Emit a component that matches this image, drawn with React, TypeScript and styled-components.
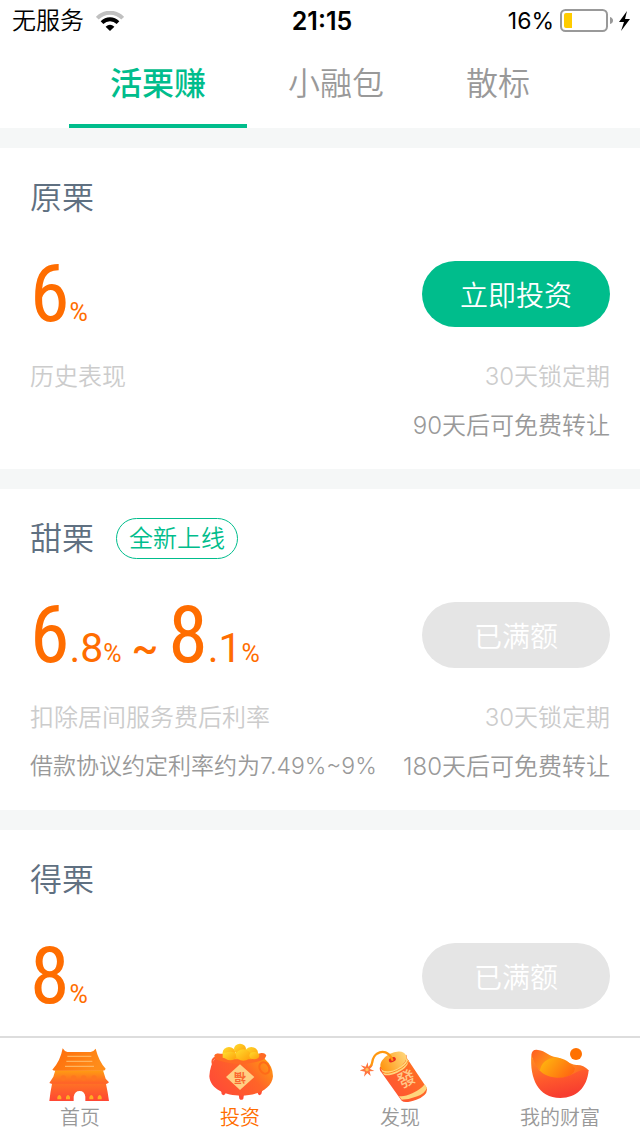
import React from "react";
import styled, { createGlobalStyle } from "styled-components";

const GREEN = "#00bd8c";
const ORANGE = "#ff6d00";

const GlobalStyle = createGlobalStyle`
  * { box-sizing: border-box; }
  body {
    margin: 0;
    background: #f5f7f7;
    font-family: Inter, "Noto Sans CJK SC", sans-serif;
    font-weight: 350;
  }
  button { font: inherit; border: 0; padding: 0; background: none; cursor: pointer; }
`;

const Screen = styled.div`
  display: flex;
  flex-direction: column;
  height: 100vh;
`;

const StatusBar = styled.header`
  display: grid;
  grid-template-columns: 1fr auto 1fr;
  align-items: center;
  height: 40px;
  padding: 0 8px 0 12px;
  background: #fff;
  color: #000;
  font-size: 24px;
  line-height: 42px;
  flex: none;
`;

const StatusGroup = styled.div<{ $end?: boolean }>`
  display: flex;
  align-items: center;
  justify-content: ${(p) => (p.$end ? "flex-end" : "flex-start")};
  gap: ${(p) => (p.$end ? 6 : 12)}px;
  font-weight: ${(p) => (p.$end ? 400 : 350)};
  font-size: ${(p) => (p.$end ? 23 : 24)}px;
`;

const Clock = styled.time`
  font-weight: 600;
  font-size: 25px;
`;

const Tabs = styled.nav`
  display: flex;
  justify-content: center;
  height: 88px;
  background: #fff;
  flex: none;
`;

const Tab = styled.button<{ $active?: boolean }>`
  && {
    padding: 0 41px;
    border-top: 4px solid transparent;
    border-bottom: 4px solid ${(p) => (p.$active ? GREEN : "transparent")};
    color: ${(p) => (p.$active ? GREEN : "#999")};
    font-size: 32px;
    font-weight: ${(p) => (p.$active ? 500 : 350)};
    line-height: 76px;
  }
`;

const List = styled.main`
  display: flex;
  flex-direction: column;
  flex: 1;
  gap: 20px;
  padding-top: 20px;
  min-height: 0;
  overflow: hidden;
`;

const Card = styled.section`
  padding: 0 30px 19px;
  background: #fff;
  flex: none;
`;

const CardHead = styled.div`
  display: flex;
  align-items: center;
  gap: 22px;
  height: 98px;
`;

const Title = styled.h2`
  margin: 0;
  padding-bottom: 4px;
  color: #5f7081;
  font-size: 32px;
  font-weight: 350;
`;

const Badge = styled.span`
  padding: 0 12px;
  border: 1px solid ${GREEN};
  border-radius: 21px;
  color: ${GREEN};
  font-size: 24px;
  line-height: 39px;
`;

const Offer = styled.div`
  display: flex;
  align-items: flex-start;
  justify-content: space-between;
  height: 66px;
  margin: 15px 0 25px;
`;

const Rate = styled.div`
  display: flex;
  align-items: baseline;
  color: ${ORANGE};
  font-family: Roboto, sans-serif;
  font-weight: 400;
  line-height: 66px;
`;

const Whole = styled.span`
  font-family: "Roboto Condensed", "Liberation Sans Narrow", Roboto, sans-serif;
  font-size: 80px;
  font-weight: 400;
`;

const Decimal = styled.span`
  font-size: 41px;
`;

const Percent = styled.span`
  font-size: 25px;
`;

const Tilde = styled.span`
  margin: 0 10px;
  font-size: 40px;
  font-weight: 500;
`;

const Invest = styled.button`
  && {
    width: 188px;
    height: 66px;
    border-radius: 33px;
    background: ${GREEN};
    color: #fff;
    font-size: 28px;
  }
  &&:disabled { background: #e5e5e5; }
`;

const Line = styled.div<{ $dark?: boolean }>`
  display: flex;
  justify-content: space-between;
  height: 49px;
  color: ${(p) => (p.$dark ? "#999" : "#ccc")};
  font-size: 24px;
  line-height: 49px;
  white-space: nowrap;
`;

const Note = styled.span`
  font-size: 23px;
`;

const BottomBar = styled.nav`
  display: grid;
  grid-template-columns: repeat(4, 1fr);
  height: 100px;
  border-top: 2px solid #ddd;
  background: #fff;
  flex: none;
`;

const NavItem = styled.a<{ $active?: boolean }>`
  display: flex;
  flex-direction: column;
  align-items: center;
  padding-top: 4px;
  color: ${(p) => (p.$active ? ORANGE : "#999")};
  font-size: 20px;
  line-height: 32px;
  text-decoration: none;
`;

const Icon = styled.svg`
  display: block;
  width: 80px;
  height: 60px;
`;

function Wifi() {
  return (
    <svg width="28" height="20" viewBox="0 0 28 20" fill="none" aria-hidden="true">
      <path d="M1.3 7.2C8.5-.1 19.5-.1 26.7 7.2" stroke="#c0c0c0" strokeWidth="4" />
      <path d="M6 11.6C10.6 7.1 17.4 7.1 22 11.6" stroke="#000" strokeWidth="3.8" />
      <path d="M9.6 15.7Q14 11.7 18.4 15.7L14 20Z" fill="#000" />
    </svg>
  );
}

function Battery() {
  return (
    <svg width="72" height="24" viewBox="0 0 72 24" aria-hidden="true">
      <rect x="1" y="1" width="46" height="21" rx="4.5" fill="#fff" stroke="#999" strokeWidth="2" />
      <path d="M4 6a2 2 0 0 1 2-2h6v15H6a2 2 0 0 1-2-2Z" fill="#fc0" />
      <path d="M50 8q3 1 3 3.500t-3 3.500Z" fill="#999" />
      <path d="M67 2 59 13h5l-3 9 9-12h-5Z" fill="#000" />
    </svg>
  );
}

function TempleIcon() {
  return (
    <Icon viewBox="30 36 240 180" aria-hidden="true">
      <defs>
        <linearGradient id="roof" x1="0" y1="0" x2="1" y2="0.3">
          <stop offset="0" stopColor="#ff6a0a" /><stop offset="1" stopColor="#ff8d1a" />
        </linearGradient>
        <linearGradient id="wall" x1="0" y1="0" x2="0" y2="1">
          <stop offset="0" stopColor="#ff9c12" /><stop offset="1" stopColor="#ff6029" />
        </linearGradient>
        <linearGradient id="base" x1="0" y1="0" x2="0" y2="1">
          <stop offset="0" stopColor="#ff7a22" /><stop offset="1" stopColor="#ff4634" />
        </linearGradient>
      </defs>
      <path d="M63 158 66 162Q61 185 58 213H131V200Q134 183 149 183T166 200V213H237Q233 184 228 162L235 158 225 150H72Z" fill="url(#base)" />
      <path d="M76 121 70 140 58 159Q64 162 69 161H227Q234 161 237 157L227 146 219 121Z" fill="url(#wall)" />
      <path d="M98 55Q104 65 112 66H182Q191 64 197 56Q207 95 227 116Q226 122 218 122H76Q70 122 67 119Q91 94 98 55Z" fill="url(#roof)" />
      <path d="M112 79H184M109 94H187M105 109H192" stroke="#ffb45e" strokeWidth="4" />
      <g fill="#ff7620"><circle cx="100" cy="144" r="8" /><circle cx="131" cy="144" r="8" /><circle cx="161" cy="144" r="8" /><circle cx="192" cy="144" r="8" /></g>
      <g fill="#ffac23">
        <path d="M82 208V201q6-12 12 0v7ZM108 208v-7q6-12 12 0v7ZM178 208v-7q6-12 12 0v7ZM203 208v-7q6-12 12 0v7Z" />
      </g>
    </Icon>
  );
}

function PotIcon() {
  return (
    <Icon viewBox="30 36 240 180" aria-hidden="true">
      <defs>
        <linearGradient id="pot" x1="0" y1="0.8" x2="1" y2="0.2">
          <stop offset="0" stopColor="#ff4938" /><stop offset="0.6" stopColor="#ff6428" /><stop offset="1" stopColor="#ff9d12" />
        </linearGradient>
        <linearGradient id="coin" x1="0" y1="0" x2="1" y2="1">
          <stop offset="0" stopColor="#ffdc2e" /><stop offset="1" stopColor="#ff9d0a" />
        </linearGradient>
      </defs>
      <path d="M93 180h14l-1 12q-6 7-11 0ZM146 193h16l-2 13q-6 7-12 0ZM202 180h15l-3 12q-6 7-10 0Z" fill="#ff4c35" />
      <path d="M77 82Q63 87 69 105" fill="none" stroke="#ff5c2d" strokeWidth="6" />
      <path d="M76 84Q72 73 84 71H221Q230 74 224 86Q249 108 249 139C246 177 201 197 154 197S60 178 58 139Q60 105 76 84Z" fill="url(#pot)" />
      <path d="M73 76Q77 68 87 71Q150 91 214 69Q224 68 229 76Q225 88 216 91Q150 113 82 90Q74 87 73 76Z" fill="#ff6a25" />
      <g fill="url(#coin)">
        <ellipse cx="117" cy="68" rx="19" ry="17" /><ellipse cx="150" cy="57" rx="18" ry="16" /><ellipse cx="184" cy="68" rx="20" ry="17" />
        <path d="M98 68h105v14l-18 6h-70l-17-5Z" />
        <ellipse cx="121" cy="78" rx="18" ry="13" /><ellipse cx="160" cy="75" rx="22" ry="17" /><ellipse cx="193" cy="77" rx="15" ry="11" />
      </g>
      <ellipse cx="223" cy="114" rx="14" ry="18" fill="none" stroke="#ff6b19" strokeWidth="6" transform="rotate(-30 223 114)" />
      <path d="M150 103 193 141 150 180 108 141Z" fill="#ffcf83" />
      <text x="150" y="154" textAnchor="middle" fontSize="36" fontWeight="700" fill="#fa6830" transform="rotate(180 150 142)">福</text>
    </Icon>
  );
}

function CrackerIcon() {
  return (
    <Icon viewBox="30 36 240 180" aria-hidden="true">
      <defs>
        <linearGradient id="tube" x1="0" y1="1" x2="1" y2="0">
          <stop offset="0" stopColor="#ff4b38" /><stop offset="1" stopColor="#ff7b1c" />
        </linearGradient>
        <linearGradient id="top" x1="0" y1="0" x2="1" y2="0">
          <stop offset="0" stopColor="#ff9510" /><stop offset="1" stopColor="#ffd579" />
        </linearGradient>
      </defs>
      <path d="M90 111 166 76Q171 71 170 83L230 173Q236 195 199 209Q165 221 155 212L94 127Q87 120 90 111Z" fill="url(#tube)" />
      <path d="M91 113Q99 130 135 116T169 83L176 94Q171 116 142 128T102 134ZM147 198Q161 202 187 190T224 163L231 173Q226 189 202 199T155 209Z" fill="#ffd57d" />
      <path d="M99 127Q111 135 140 122T175 91" fill="none" stroke="#ff8c24" strokeWidth="3" />
      <ellipse cx="130" cy="94" rx="42" ry="25" fill="url(#top)" transform="rotate(-28 130 94)" />
      <ellipse cx="127" cy="89" rx="11" ry="7" fill="#e92c1e" transform="rotate(-24 127 89)" />
      <path d="M127 89C117 66 98 60 81 71C58 87 76 105 53 116" fill="none" stroke="#ff9810" strokeWidth="7" strokeLinecap="round" />
      <path d="m53 97 2 14 14-5-10 10 14 7-14 1 3 14-10-9-10 11 3-15-16-4 14-5-11-10 15 4Z" fill="#ff7540" />
      <circle cx="51" cy="119" r="5" fill="#ffc457" />
      <text x="170" y="166" textAnchor="middle" fontSize="54" fontWeight="500" fill="#ffc98a" transform="rotate(-27 170 148)">發</text>
    </Icon>
  );
}

function IngotIcon() {
  return (
    <Icon viewBox="30 36 240 180" aria-hidden="true">
      <defs>
        <linearGradient id="inner" x1="0" y1="0" x2="1" y2="0.4">
          <stop offset="0" stopColor="#ff5c22" /><stop offset="0.5" stopColor="#ffa014" /><stop offset="1" stopColor="#ff6a24" />
        </linearGradient>
        <linearGradient id="gold" x1="0" y1="0.2" x2="1" y2="0.7">
          <stop offset="0" stopColor="#ffb70e" /><stop offset="1" stopColor="#ff6511" />
        </linearGradient>
        <linearGradient id="bowl" x1="0" y1="0" x2="0.3" y2="1">
          <stop offset="0" stopColor="#ff9420" /><stop offset="0.6" stopColor="#ff592c" /><stop offset="1" stopColor="#f73e30" />
        </linearGradient>
      </defs>
      <path d="M64 75Q66 57 84 60C106 62 119 80 139 82C158 85 176 103 199 105Q220 104 236 121Q218 150 150 150Q77 139 64 75Z" fill="url(#inner)" />
      <path d="M89 126C92 99 111 83 137 83C166 83 180 99 195 115Q193 139 154 144Q108 148 89 126Z" fill="url(#gold)" />
      <path d="M64 75C77 106 88 139 140 143C186 146 205 111 236 121C231 173 200 204 151 204C84 204 59 145 64 75Z" fill="url(#bowl)" />
      <circle cx="198" cy="72" r="18" fill="#ff7100" />
    </Icon>
  );
}

type RatePart = { whole: string; decimal?: string };

type Product = {
  name: string;
  badge?: string;
  rates: RatePart[];
  open?: boolean;
  label?: string;
  lock?: string;
  note?: string;
  transfer?: string;
};

const products: Product[] = [
  { name: "原栗", rates: [{ whole: "6" }], open: true, label: "历史表现", lock: "30天锁定期", transfer: "90天后可免费转让" },
  {
    name: "甜栗",
    badge: "全新上线",
    rates: [{ whole: "6", decimal: ".8" }, { whole: "8", decimal: ".1" }],
    label: "扣除居间服务费后利率",
    lock: "30天锁定期",
    note: "借款协议约定利率约为7.49%~9%",
    transfer: "180天后可免费转让",
  },
  { name: "得栗", rates: [{ whole: "8" }] },
];

function ProductCard({ product }: { product: Product }) {
  return (
    <Card>
      <CardHead>
        <Title>{product.name}</Title>
        {product.badge && <Badge>{product.badge}</Badge>}
      </CardHead>
      <Offer>
        <Rate>
          {product.rates.map((rate, i) => (
            <React.Fragment key={i}>
              {i > 0 && <Tilde>~</Tilde>}
              <Whole>{rate.whole}</Whole>
              {rate.decimal && <Decimal>{rate.decimal}</Decimal>}
              <Percent>%</Percent>
            </React.Fragment>
          ))}
        </Rate>
        <Invest disabled={!product.open}>{product.open ? "立即投资" : "已满额"}</Invest>
      </Offer>
      {product.lock && (
        <Line>
          <span>{product.label}</span>
          <span>{product.lock}</span>
        </Line>
      )}
      {product.transfer && (
        <Line $dark>
          <Note>{product.note}</Note>
          <span>{product.transfer}</span>
        </Line>
      )}
    </Card>
  );
}

export default function App() {
  return (
    <Screen>
      <GlobalStyle />
      <StatusBar>
        <StatusGroup>
          <span>无服务</span>
          <Wifi />
        </StatusGroup>
        <Clock>21:15</Clock>
        <StatusGroup $end>
          <span>16%</span>
          <Battery />
        </StatusGroup>
      </StatusBar>
      <Tabs>
        <Tab $active>活栗赚</Tab>
        <Tab>小融包</Tab>
        <Tab>散标</Tab>
      </Tabs>
      <List>
        {products.map((p) => (
          <ProductCard key={p.name} product={p} />
        ))}
      </List>
      <BottomBar>
        <NavItem href="#home"><TempleIcon />首页</NavItem>
        <NavItem href="#invest" $active><PotIcon />投资</NavItem>
        <NavItem href="#discover"><CrackerIcon />发现</NavItem>
        <NavItem href="#wealth"><IngotIcon />我的财富</NavItem>
      </BottomBar>
    </Screen>
  );
}
